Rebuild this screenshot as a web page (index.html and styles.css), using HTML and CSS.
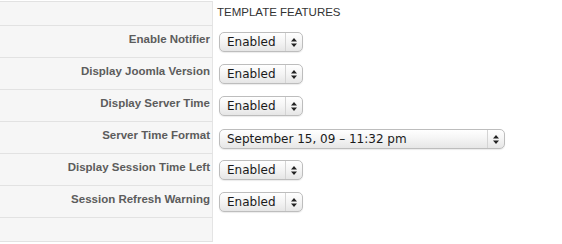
FILE: index.html
```html
<!DOCTYPE html>
<html lang="en">
<head>
  <meta charset="UTF-8" />
  <title>Template Features</title>
  <link rel="stylesheet" href="styles.css">
</head>
<body>
  <div class="params">
    <div class="row head">
      <div class="key"></div>
      <div class="val"><span class="title">TEMPLATE FEATURES</span></div>
    </div>

    <div class="row">
      <div class="key">Enable Notifier</div>
      <div class="val">
        <div class="select"><span class="text">Enabled</span><span class="arrows"><svg width="6" height="9" viewBox="0 0 6 9"><path d="M3 0L6 3.5H0Z M3 9L6 5.5H0Z" fill="#222"/></svg></span></div>
      </div>
    </div>

    <div class="row">
      <div class="key">Display Joomla Version</div>
      <div class="val">
        <div class="select"><span class="text">Enabled</span><span class="arrows"><svg width="6" height="9" viewBox="0 0 6 9"><path d="M3 0L6 3.5H0Z M3 9L6 5.5H0Z" fill="#222"/></svg></span></div>
      </div>
    </div>

    <div class="row">
      <div class="key">Display Server Time</div>
      <div class="val">
        <div class="select"><span class="text">Enabled</span><span class="arrows"><svg width="6" height="9" viewBox="0 0 6 9"><path d="M3 0L6 3.5H0Z M3 9L6 5.5H0Z" fill="#222"/></svg></span></div>
      </div>
    </div>

    <div class="row">
      <div class="key">Server Time Format</div>
      <div class="val">
        <div class="select wide"><span class="text">September 15, 09 – 11:32 pm</span><span class="arrows"><svg width="6" height="9" viewBox="0 0 6 9"><path d="M3 0L6 3.5H0Z M3 9L6 5.5H0Z" fill="#222"/></svg></span></div>
      </div>
    </div>

    <div class="row">
      <div class="key">Display Session Time Left</div>
      <div class="val">
        <div class="select"><span class="text">Enabled</span><span class="arrows"><svg width="6" height="9" viewBox="0 0 6 9"><path d="M3 0L6 3.5H0Z M3 9L6 5.5H0Z" fill="#222"/></svg></span></div>
      </div>
    </div>

    <div class="row">
      <div class="key">Session Refresh Warning</div>
      <div class="val">
        <div class="select"><span class="text">Enabled</span><span class="arrows"><svg width="6" height="9" viewBox="0 0 6 9"><path d="M3 0L6 3.5H0Z M3 9L6 5.5H0Z" fill="#222"/></svg></span></div>
      </div>
    </div>

    <div class="row foot">
      <div class="key"></div>
      <div class="val"></div>
    </div>
  </div>
</body>
</html>
```

FILE: styles.css
```css
body {
  margin: 0;
  padding-top: 1px;
  background-color: #fff;
  font-family: 'Liberation Sans', Arial, sans-serif;
  font-size: 11.5px;
}

.params {
  width: 562px;
}

.row {
  display: flex;
  height: 32px;
}

.row.head {
  height: 25px;
}

.row.foot {
  height: 24px;
}

.key {
  width: 213px;
  flex: none;
  box-sizing: border-box;
  padding: 7px 2px 0 0;
  background-color: #f6f6f6;
  border-right: 1px solid #e4e4e4;
  border-bottom: 1px solid #e2e2e2;
  text-align: right;
  font-weight: bold;
  line-height: 13px;
  color: #5c5c5c;
}

.head .key {
  border-top: 1px solid #e2e2e2;
}

.val {
  flex: 1;
  padding: 6px 0 0 6px;
}

.title {
  display: block;
  margin: -1px 0 0 -2px;
  line-height: 13px;
  color: #333;
}

.select {
  display: flex;
  width: 84px;
  height: 20px;
  box-sizing: border-box;
  border: 1px solid #bdbdbd;
  border-radius: 5px;
  background: linear-gradient(#ffffff, #f4f4f4 50%, #e6e6e6);
  box-shadow: 0 1px 1px rgba(0, 0, 0, 0.08);
  font-family: 'DejaVu Sans', 'Lucida Grande', sans-serif;
  font-size: 12px;
  color: #1a1a1a;
}

.select.wide {
  width: 286px;
  margin-top: 1px;
}

.select .text {
  flex: 1;
  padding-left: 7px;
  line-height: 18px;
  white-space: nowrap;
}

.select .arrows {
  width: 16px;
  flex: none;
  border-left: 1px solid #d4d4d4;
  display: flex;
  align-items: center;
  justify-content: center;
}
```
